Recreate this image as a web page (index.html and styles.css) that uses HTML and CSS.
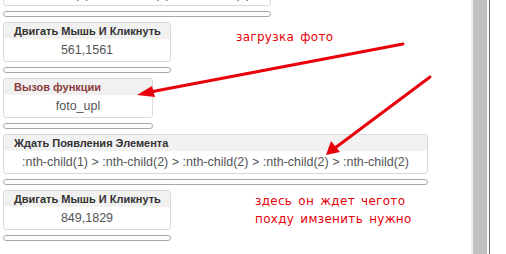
FILE: index.html
```html
<!doctype html>
<html>

<head>
   <meta charset="utf-8">
   <title>steps</title>
   <link rel="stylesheet" href="styles.css">
</head>

<body>

   <div class="window">
      <div class="panel">
         <div class="steps">
            <div class="step first">
               <div class="card">
                  <div class="cardHead">Двигать Мышь И Кликнуть</div>
                  <div class="cardBody">:nth-child(1) &gt; :nth-child(2) &gt; :nth-child(2)</div>
               </div>
               <div class="bar"></div>
            </div>

            <div class="step mid">
               <div class="card">
                  <div class="cardHead">Двигать Мышь И Кликнуть</div>
                  <div class="cardBody">561,1561</div>
               </div>
               <div class="bar"></div>
            </div>

            <div class="step small">
               <div class="card">
                  <div class="cardHead func">Вызов функции</div>
                  <div class="cardBody">foto_upl</div>
               </div>
               <div class="bar"></div>
            </div>

            <div class="step wide">
               <div class="card">
                  <div class="cardHead">Ждать Появления Элемента</div>
                  <div class="cardBody">:nth-child(1) &gt; :nth-child(2) &gt; :nth-child(2) &gt; :nth-child(2) &gt; :nth-child(2)</div>
               </div>
               <div class="bar"></div>
            </div>

            <div class="step mid">
               <div class="card">
                  <div class="cardHead">Двигать Мышь И Кликнуть</div>
                  <div class="cardBody">849,1829</div>
               </div>
               <div class="bar"></div>
            </div>
         </div>

         <!-- annotations drawn over the list -->
         <div class="note noteTop">загрузка фото</div>
         <div class="note noteBottom">здесь он ждет чегото<br />похду имзенить нужно</div>

         <svg class="arrows" width="471" height="254" viewBox="0 0 471 254">
            <line x1="403" y1="44" x2="150" y2="92" />
            <polygon points="137,95 152,86 155,97" />
            <line x1="430" y1="77" x2="335" y2="148" />
            <polygon points="326,155 331,141 340,152" />
         </svg>
      </div>

      <div class="scroll">
         <div class="track"></div>
         <div class="thumb"></div>
         <div class="gap"></div>
         <div class="edge"></div>
      </div>
   </div>

</body>

</html>
```

FILE: styles.css
```css
html,
body {
   padding: 0;
   margin: 0;
   background: #FFF;
   font-family: "Liberation Sans", Arial, sans-serif;
   overflow: hidden;
}

.window {
   display: flex;
   height: 254px;
}

.panel {
   position: relative;
   width: 471px;
   flex: none;
}

.steps {
   display: flex;
   flex-direction: column;
   padding-left: 3px;
   margin-top: -34px;
}

.step {
   display: flex;
   flex-direction: column;
   margin-bottom: 5px;
}
.step.first {
   width: 268px;
}
.step.mid {
   width: 168px;
}
.step.small {
   width: 150px;
}
.step.wide {
   width: 425px;
}

.card {
   box-sizing: border-box;
   height: 40px;
   border: 1px solid #DADADA;
   border-radius: 3px;
   background: #FFF;
   overflow: hidden;
}

.cardHead {
   background: #F1F1F1;
   height: 16px;
   line-height: 16px;
   padding-left: 10px;
   font-size: 11px;
   font-weight: bold;
   color: #333;
   white-space: nowrap;
}
.cardHead.func {
   color: #8A3C3C;
}

.cardBody {
   height: 22px;
   line-height: 22px;
   text-align: center;
   font-size: 12.5px;
   color: #555;
   white-space: nowrap;
}

.bar {
   box-sizing: border-box;
   margin-top: 5px;
   height: 6px;
   border: 1px solid #A8A8A8;
   border-radius: 4px;
   background: #FFF;
}

.note {
   position: absolute;
   font-family: "DejaVu Sans", Verdana, sans-serif;
   font-size: 12px;
   color: #E8000A;
   letter-spacing: 0.3px;
   word-spacing: 2px;
}
.noteTop {
   left: 236px;
   top: 30px;
}
.noteBottom {
   left: 255px;
   top: 192px;
   line-height: 18px;
}

.arrows {
   position: absolute;
   top: 0;
   left: 0;
}
.arrows line {
   stroke: #E8000A;
   stroke-width: 3;
   stroke-linecap: round;
}
.arrows polygon {
   fill: #E8000A;
}

.scroll {
   display: flex;
   flex: 1;
}
.scroll .track {
   width: 2px;
   background: #ECECEC;
}
.scroll .thumb {
   width: 14px;
   background: #C1C1C1;
}
.scroll .gap {
   width: 2px;
   background: #FAFAFA;
}
.scroll .edge {
   width: 1px;
   background: #6F6F6F;
}
```
